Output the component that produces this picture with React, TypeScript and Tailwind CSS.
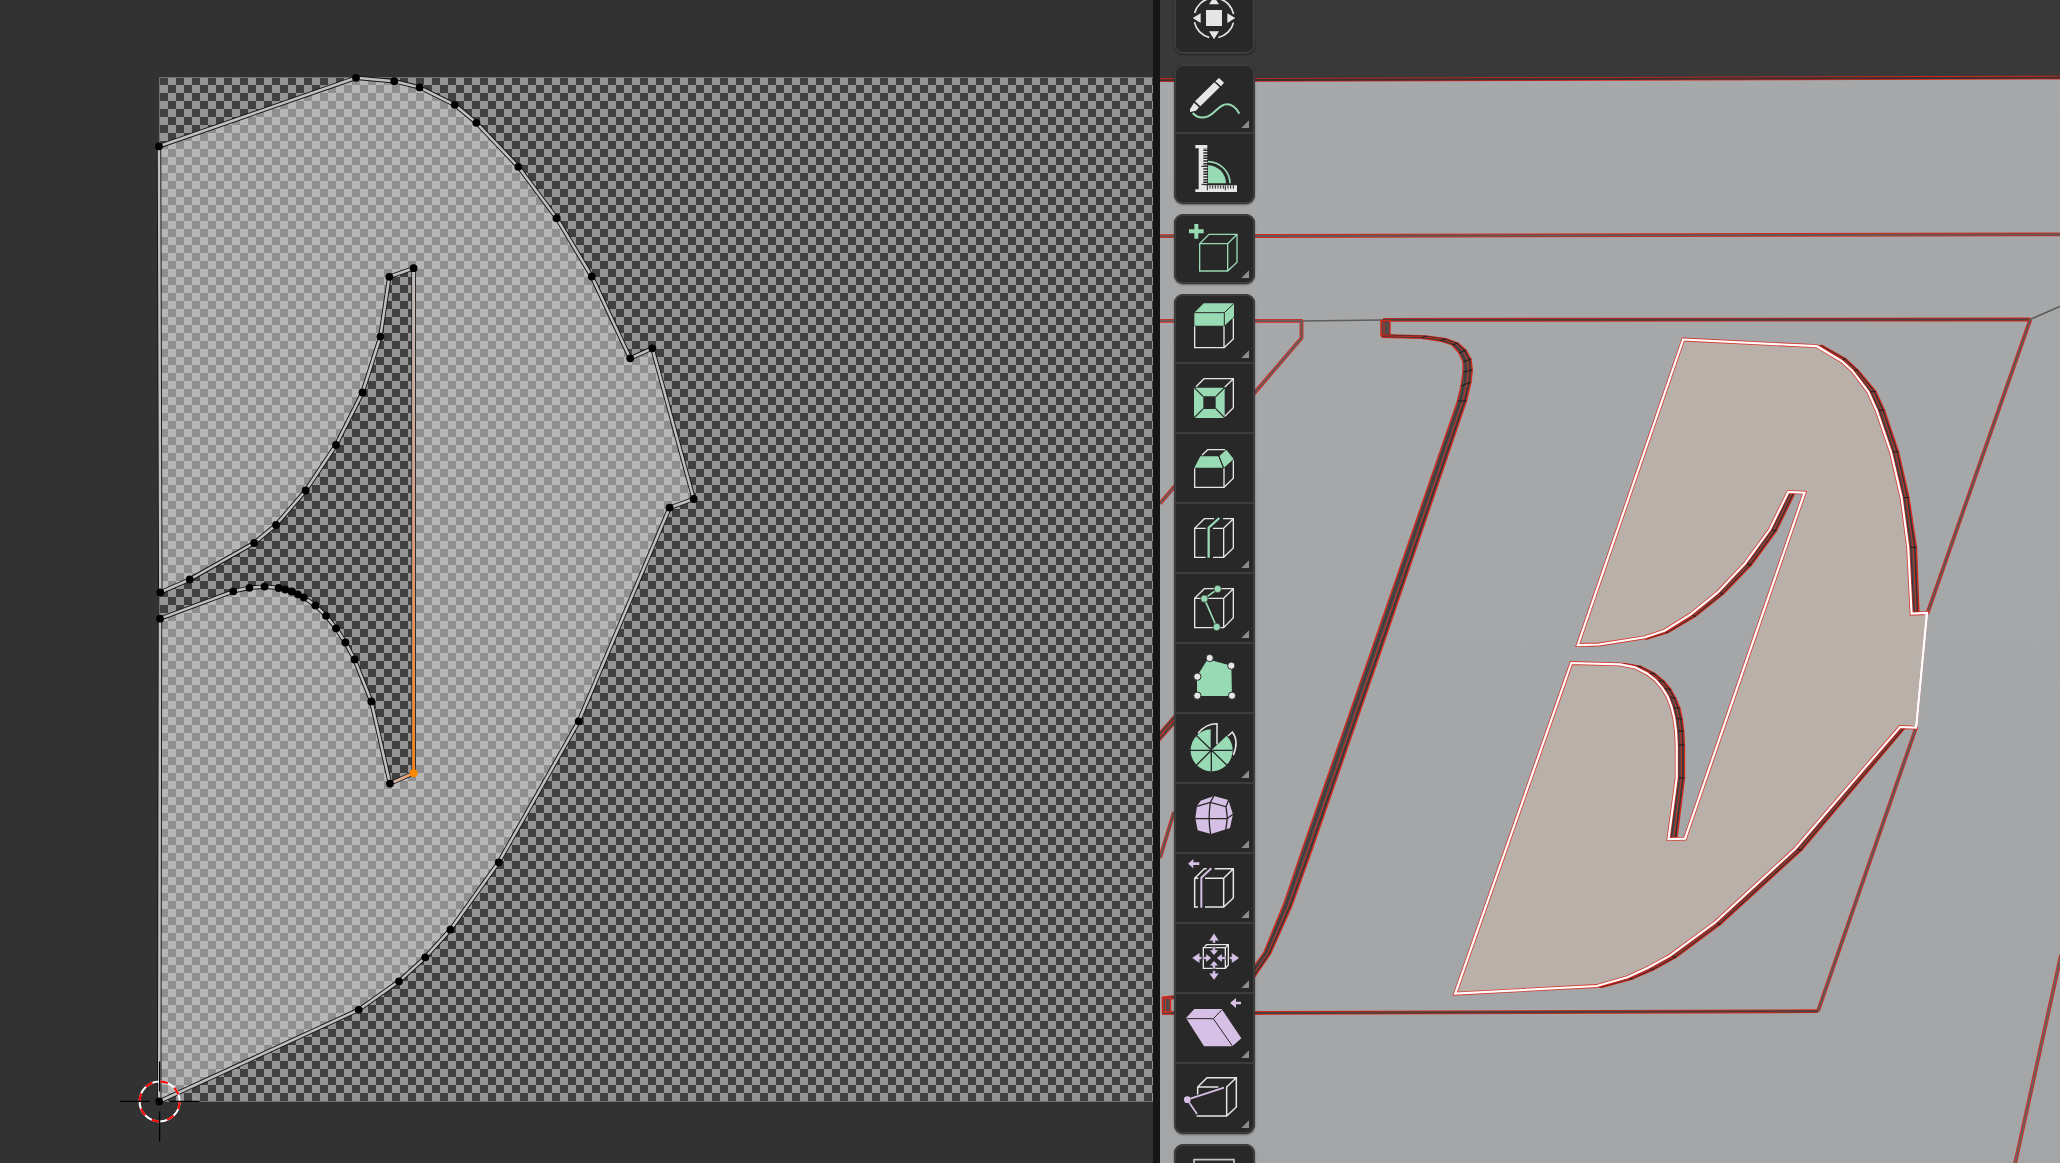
import type { ReactNode } from "react";

const W = "#e6e6e6";
const G = "#97dab3";
const P = "#d6c0e5";
const D = "#282828";
const RED = "#d8281c";

type Pt = [number, number];
const join = (pts: Pt[]) => pts.map((p) => p.join(",")).join(" ");

/* ---------- UV editor ---------- */

const uvPoints: Pt[] = [
  [159, 146.3], [356, 77.8], [394.3, 81.2], [419.6, 87.4], [454.7, 104.8], [476.4, 122.8],
  [518.3, 166.8], [556.7, 218.2], [591.8, 276.5], [630.2, 358.3], [652.4, 348.3], [693.7, 499],
  [669.6, 507.7], [578.7, 721.3], [498.7, 862.3], [450.4, 929.7], [425.3, 957.3], [399, 981.3],
  [358.7, 1009.8], [159.2, 1101.5], [160, 618.7], [233.3, 591.3], [249.4, 587.8], [264.6, 586.6],
  [278.6, 588], [285.2, 589.5], [291.7, 591.5], [297.8, 594.3], [303.8, 597.5], [315.4, 605.4],
  [326, 615.8], [336, 628.3], [345.4, 642.5], [354.5, 659.4], [371.3, 701.4], [390, 783.6],
  [413.6, 773.2], [413.6, 268.2], [389.3, 276.8], [380.4, 336.6], [362.5, 392.5], [336, 445],
  [305.7, 490.5], [276, 525], [254.2, 543], [189.7, 579.5], [160.3, 592.4],
];

function UvEditor() {
  return (
    <section className="h-full w-[1153px] shrink-0 bg-[#323232]">
      <svg className="block" width="1153" height="1163" viewBox="0 0 1153 1163">
        <defs>
          <pattern id="checker" x="160" y="77" width="16" height="16" patternUnits="userSpaceOnUse">
            <rect width="16" height="16" fill="#949494" />
            <rect width="8" height="8" fill="#404040" />
            <rect x="8" y="8" width="8" height="8" fill="#404040" />
          </pattern>
          <linearGradient id="selTall" gradientUnits="userSpaceOnUse" x1="0" y1="268" x2="0" y2="773">
            <stop offset="0" stopColor="#c2bfbd" />
            <stop offset="0.5" stopColor="#dc9c80" />
            <stop offset="1" stopColor="#ff8010" />
          </linearGradient>
          <linearGradient id="selShort" gradientUnits="userSpaceOnUse" x1="390" y1="0" x2="413" y2="0">
            <stop offset="0" stopColor="#c8bcb6" />
            <stop offset="1" stopColor="#f79152" />
          </linearGradient>
        </defs>
        <rect x="159" y="77" width="1000" height="1025" fill="#707070" />
        <rect x="160" y="78" width="1000" height="1023" fill="url(#checker)" shapeRendering="crispEdges" />
        <polygon points={join(uvPoints)} fill="#d7d7d7" fillOpacity="0.52" />
        <polygon points={join(uvPoints)} fill="none" stroke="#161616" strokeWidth="4.4" strokeLinejoin="round" />
        <polygon points={join(uvPoints)} fill="none" stroke="#c0c0c0" strokeWidth="2.5" strokeLinejoin="round" />
        <rect x="157" y="594" width="6" height="23" fill="#323232" />
        <rect x="160" y="594" width="3" height="23" fill="url(#checker)" />
        <rect x="159" y="594" width="1" height="23" fill="#707070" />
        <rect x="412.3" y="268" width="2.6" height="505" fill="url(#selTall)" />
        <line x1="390" y1="783.6" x2="413.6" y2="773.2" stroke="url(#selShort)" strokeWidth="2.5" />
        {uvPoints.map(([x, y], i) =>
          i === 36 ? null : <circle key={i} cx={x} cy={y} r="3.9" fill="#000" />
        )}
        <circle cx="413.6" cy="773.2" r="4" fill="#ff8500" />
        <g transform="translate(159.6 1101.4)" fill="none">
          <circle r="20" stroke="#fff" strokeWidth="2" />
          <circle r="20" stroke="#f00" strokeWidth="2" strokeDasharray="7.854 7.854" />
          <path d="M-40 0H-10M10 0H40M0-40V-10M0 10V40" stroke="#000" strokeWidth="1.3" />
        </g>
      </svg>
    </section>
  );
}

/* ---------- 3D viewport ---------- */

const face: Pt[] = [
  [1683.2, 339.5], [1816.8, 346.2], [1841.5, 361], [1852.3, 370.7], [1868.3, 391.8], [1876.8, 410.7],
  [1891, 452.3], [1901.6, 497.7], [1908.2, 547.3], [1911.6, 613.7], [1927, 613], [1916, 727.7],
  [1900, 727], [1795, 849], [1714.8, 922.7], [1670, 955.6], [1648, 967.8], [1627.4, 977.3],
  [1596.7, 986], [1455.2, 993.6], [1571.3, 663], [1620, 664.3], [1635, 667.3], [1647, 673.5],
  [1655.5, 680], [1662.5, 688.3], [1667.7, 696.7], [1671.6, 707], [1674.3, 718.3], [1676, 731],
  [1676.7, 745], [1676.7, 778], [1668.5, 839], [1685, 838.6], [1804.5, 492.7], [1788.3, 491.9],
  [1770, 529.3], [1745, 563.5], [1717.7, 592.4], [1690.7, 614.4], [1664.5, 630.7], [1645, 637.3],
  [1599, 644.5], [1577.8, 645],
];

type RibbonShape = { inner: Pt[]; outer: Pt[]; ticks?: number };

const ribbons: RibbonShape[] = [
  {
    inner: face.slice(1, 10),
    outer: [[1822, 345.4], [1845.5, 358.5], [1858, 370], [1876, 391.5], [1884.5, 410], [1898.5, 451.5], [1909, 497.5], [1916.5, 547.5], [1919, 612.5]],
  },
  {
    inner: face.slice(12, 19),
    outer: [[1905, 728], [1802, 850], [1720.5, 924.5], [1676, 957.5], [1653.5, 970], [1632.5, 979], [1601, 987.5]],
  },
  {
    inner: face.slice(21, 33),
    outer: [[1624, 663.3], [1641, 666.3], [1655, 673.5], [1664.5, 681.5], [1671, 689.5], [1676, 698.5], [1680, 708.5], [1682.3, 719], [1683.8, 731], [1684.5, 745], [1684.5, 778], [1677, 838]],
  },
  {
    inner: face.slice(35, 42),
    outer: [[1794.5, 494], [1776.5, 531], [1751.5, 565], [1723.5, 594], [1695.5, 616.5], [1668, 632.7], [1646, 639.3]],
  },
  {
    inner: [[1382, 337.3], [1422, 338.3], [1440, 341], [1452, 345], [1459, 353], [1463, 362], [1463, 372], [1461, 386], [1457.5, 401], [1371.5, 650], [1302, 850], [1284, 903], [1264, 952], [1252, 969]],
    outer: [[1382, 334.6], [1426, 336], [1446, 338.7], [1458, 343], [1466, 350], [1471, 359], [1472.3, 370], [1471, 382], [1466.5, 401], [1381.5, 650], [1312, 850], [1291.5, 907], [1270.5, 954], [1252, 981]],
    ticks: 8,
  },
];

function Ribbon({ inner, outer, ticks = 99 }: RibbonShape) {
  const blend = (t: number): Pt[] => inner.map(([x, y], i) => [x + (outer[i][0] - x) * t, y + (outer[i][1] - y) * t]);
  return (
    <g fill="none" strokeLinejoin="round">
      <polygon points={join([...inner, ...[...outer].reverse()])} fill="#504c4b" stroke={RED} strokeWidth="1.3" />
      <polyline points={join(blend(0.3))} stroke="#3c3837" strokeWidth="1.2" />
      <polyline points={join(blend(0.8))} stroke="#38302f" strokeWidth="1.2" />
      <polyline points={join(blend(0.6))} stroke={RED} strokeWidth="0.9" />
      {inner.slice(1, -1).map((p, i) =>
        i < ticks ? (
          <line key={i} x1={p[0]} y1={p[1]} x2={outer[i + 1][0]} y2={outer[i + 1][1]} stroke="#241f1f" strokeWidth="1.2" />
        ) : null
      )}
    </g>
  );
}

const seams: { pts: Pt[]; core: string }[] = [
  { pts: [[1160, 80.2], [2060, 77.6]], core: "#3c3030" },
  { pts: [[1160, 236.2], [2060, 234.4]], core: "#5f5a5a" },
  { pts: [[1160, 320.8], [1301.5, 320.8], [1301.5, 338], [1160, 503.5]], core: "#655f5f" },
  { pts: [[1383, 319.8], [2030.3, 319.5]], core: "#4a4040" },
  { pts: [[2030.3, 319.5], [1927.5, 613]], core: "#5e5a5a" },
  { pts: [[1916, 728], [1818, 1011.2]], core: "#5e5a5a" },
  { pts: [[1818, 1011.2], [1255, 1013]], core: "#4a4040" },
  { pts: [[2061, 955], [2015, 1164]], core: "#6a6060" },
  { pts: [[1160, 858], [1174, 812]], core: "#5f5a5a" },
  { pts: [[1158, 736], [1178, 713]], core: "#4a4646" },
  { pts: [[1158, 741], [1178, 718]], core: "#4a4646" },
  { pts: [[1162, 1013], [1176, 1013]], core: "#4a4646" },
  { pts: [[1162, 998.5], [1176, 997]], core: "#4a4646" },
];

function Viewport() {
  return (
    <svg className="block" width="900" height="1163" viewBox="1160 0 900 1163">
      <defs>
        <linearGradient id="plane" x1="0" y1="0" x2="0" y2="1">
          <stop offset="0" stopColor="#a7a8a9" />
          <stop offset="1" stopColor="#a3a5a6" />
        </linearGradient>
      </defs>
      <rect x="1160" y="0" width="900" height="90" fill="#393939" />
      <polygon points="1160,80 2060,77.5 2060,1163 1160,1163" fill="url(#plane)" />
      <g fill="none" stroke="#5c5d5e" strokeWidth="1.5">
        <path d="M1302 321L1383 320M2030 319.5L2061 306" />
      </g>
      {seams.map(({ pts, core }, i) => (
        <g key={i} fill="none" strokeLinejoin="round">
          <polyline points={join(pts)} stroke={RED} strokeWidth="3.8" />
          <polyline points={join(pts)} stroke={core} strokeWidth="2.1" />
        </g>
      ))}
      <rect x="1381" y="320.5" width="9" height="15" fill="#504c4b" stroke={RED} strokeWidth="1.4" />
      <path d="M1384 320V335" stroke={RED} strokeWidth="1" />
      <rect x="1162.5" y="998" width="8" height="14" fill="#504c4b" stroke={RED} strokeWidth="1.6" />
      <path d="M1165.5 998V1013" stroke={RED} strokeWidth="1" />
      <polygon points={join(face)} fill="#b9b0aa" />
      {ribbons.map((r, i) => (
        <Ribbon key={i} {...r} />
      ))}
      <polygon points={join(face)} fill="none" stroke={RED} strokeOpacity="0.85" strokeWidth="3.8" />
      <polygon points={join(face)} fill="none" stroke="#fff" strokeWidth="2.2" />
      <path d="M1929 614.5L1918.5 726" stroke="#a6a7a8" strokeWidth="2" />
      <path d="M1924.8 614.5L1914 726" stroke="#b9b0aa" strokeWidth="2" />
      <path d="M1926.9 613.5L1916.2 727" stroke="#fff" strokeWidth="2.2" />
    </svg>
  );
}

/* ---------- toolbar ---------- */

type Tool = { y: number; menu?: boolean; art: ReactNode };

const cube = "M164 730L193 701H280V788L251 818H164ZM164 730H251V818M251 730L280 701";

const transformTool: Tool[] = [
  {
    y: -48,
    art: (
      <g fill={W}>
        <circle cx="222" cy="54" r="60" fill="none" stroke={W} strokeWidth="5" strokeDasharray="66 28.25" strokeDashoffset="-14.1" />
        <path d="M198 30H246V78H198ZM158 54L182 40V69ZM286 54L262 40V69ZM222 118L207 94H237ZM222-10L207 13H237Z" />
      </g>
    ),
  },
];

const annotationTools: Tool[] = [
  {
    y: 192,
    menu: true,
    art: (
      <>
        <path d="M158 339C170 352 187 356 204 349C226 340 238 313 260 313C278 313 289 324 298 341" fill="none" stroke={G} strokeWidth="6" />
        <path fill={W} d="M237 234L252 248L243 259L226 244ZM223 247L239 262L181 319L165 304ZM162 308L177 322L168 332L150 336V328Z" />
      </>
    ),
  },
  {
    y: 402,
    art: (
      <>
        <path d="M204 550V496A54 54 0 0 1 258 550Z" fill={G} />
        <path d="M204 485A66 66 0 0 1 270 550" fill="none" stroke={G} strokeWidth="5" />
        <path fill={W} d="M166 435H202V445H178V568H291V576H166V568H176V445H166ZM178 445H190V568H178ZM190 556H291V576H180Z" />
        <path stroke={W} strokeWidth="3.5" d="M188 447H202M188 455H202M188 463H202M188 471H202M188 479H202M188 487H202M188 495H202M188 503H202M188 511H202M188 519H202M188 527H202M188 535H202M188 543H202M188 551H202" />
        <path stroke={D} strokeWidth="3" d="M184 499H202M184 553H202M202 552V571M210 556V566M218 556V566M226 556V566M234 556V566M242 556V566M250 556V566M256 556V571M264 556V566M272 556V566M280 556V566" />
      </>
    ),
  },
];

const addTools: Tool[] = [
  {
    y: 642,
    menu: true,
    art: (
      <>
        <path fill={G} d="M163 672H175V688H191V700H175V716H163V700H147V688H163Z" />
        <path fill="none" stroke={G} strokeWidth="4" d="M179 731L207 703H291V787L263 813H179ZM179 731H263V813M263 731L291 703" />
      </>
    ),
  },
];

const modellingTools: Tool[] = [
  {
    y: 27,
    menu: true,
    art: (
      <>
        <path fill="none" stroke={W} strokeWidth="4" d="M164 124V188H252V124M252 188L280 162V100" />
        <path fill={G} d="M163 83L191 55H282V95L253 122H163Z" />
        <path fill="none" stroke={D} strokeWidth="3" d="M163 83H253V122M253 83L282 55" />
      </>
    ),
  },
  {
    y: 237,
    art: (
      <>
        <path fill="none" stroke={W} strokeWidth="4" d="M168 305L192 281H280V368L253 395M254 307L280 281" />
        <path fill={G} fillRule="evenodd" d="M162 308H254V399H162ZM190 334V372H227V334Z" />
        <path stroke={D} strokeWidth="3.5" d="M162 307L190 335M255 307L227 335M162 399L190 371M255 399L227 371" />
      </>
    ),
  },
  {
    y: 447,
    art: (
      <>
        <path fill="none" stroke={W} strokeWidth="4" d="M164 550V607H252V550M252 607L280 580V526M186 511L203 494H255" />
        <path fill={G} d="M163 548L181 514H235L249 548ZM238 513L259 494L281 522L252 548Z" />
        <path d="M236 512L251 549" stroke={D} strokeWidth="3" />
      </>
    ),
  },
  {
    y: 657,
    menu: true,
    art: (
      <>
        <path fill="none" stroke={W} strokeWidth="4" d="M197 817H164V730L193 701H222M164 730H197M219 730H251V817H219M251 817L280 789V701H249M251 730L280 701" />
        <path fill="none" stroke={G} strokeWidth="7" d="M206 818V728L238 699" />
      </>
    ),
  },
  {
    y: 12,
    menu: true,
    art: (
      <>
        <path transform="translate(0 -645)" fill="none" stroke={W} strokeWidth="4" d={cube} />
        <path fill="none" stroke={D} strokeWidth="12" d="M233 57L193 86L230 171" />
        <path fill="none" stroke={G} strokeWidth="5" d="M233 57L193 86L230 171" />
        <g fill={G} stroke={D} strokeWidth="2">
          <circle cx="233" cy="57" r="11" />
          <circle cx="193" cy="86" r="11" />
          <circle cx="230" cy="171" r="11" />
        </g>
      </>
    ),
  },
  {
    y: 222,
    art: (
      <>
        <path fill={G} d="M171 378V319L203 268L274 287L276 378Z" />
        <g fill={W} stroke={D} strokeWidth="3">
          <circle cx="209" cy="264" r="11" />
          <circle cx="274" cy="287" r="11" />
          <circle cx="172" cy="320" r="11" />
          <circle cx="172" cy="377" r="11" />
          <circle cx="276" cy="377" r="11" />
        </g>
      </>
    ),
  },
  {
    y: 432,
    menu: true,
    art: (
      <>
        <path fill="none" stroke={W} strokeWidth="4.5" d="M174 490C190 470 208 461 231 461V523M264 498L277 486C294 508 290 532 280 556" />
        <path fill={G} d="M214 541V478A63 63 0 1 0 260 497Z" />
        <path stroke={D} strokeWidth="4" d="M150 541H278M214 478V604M170 497L260 585M168 587L214 541" />
      </>
    ),
  },
  {
    y: 642,
    menu: true,
    art: (
      <>
        <path fill={P} d="M182 692L222 678L265 690L279 733L270 774L213 792L173 781L166 745L171 708Z" />
        <path fill="none" stroke={D} strokeWidth="4" d="M171 709L211 697L258 710L262 744L257 782M222 677L211 697C206 730 206 760 212 793M165 746H261L280 732M258 710L266 690" />
      </>
    ),
  },
  {
    y: 12,
    menu: true,
    art: (
      <>
        <path fill={P} d="M144 41L160 27V37H178V45H160V55Z" />
        <path fill="none" stroke={W} strokeWidth="4.5" d="M174 171H164V85L193 56H200M164 85H175M195 171H251V85H195M251 171L280 144V56H224M251 85L280 56" />
        <path fill="none" stroke={P} strokeWidth="6" d="M184 173V83L214 55" />
      </>
    ),
  },
  {
    y: 222,
    menu: true,
    art: (
      <>
        <path fill="none" stroke={W} strokeWidth="4" d="M190 293H256V355H190ZM193 290L200 284H265V345L257 354M256 293L265 284" />
        <path
          fill={P}
          stroke={D}
          strokeWidth="1"
          d="M222 250L237 272H226V279H218V272H207ZM222 390L237 370H226V362H218V370H207ZM156 324L179 308V320H185V328H179V340ZM298 324L275 308V320H269V328H275V340ZM222 316L209 300H218V290H226V300H235ZM222 332L209 347H218V357H226V347H235ZM214 324L198 311V320H188V328H198V337ZM230 324L246 311V320H257V328H246V337Z"
        />
      </>
    ),
  },
  {
    y: 432,
    menu: true,
    art: (
      <>
        <path fill={P} d="M270 459L288 444V455H303V463H288V474ZM138 504L163 477H245L304 565L277 589H192Z" />
        <path fill="none" stroke={D} strokeWidth="3" d="M140 506H220L277 588M220 506L246 479" />
      </>
    ),
  },
  {
    y: 642,
    menu: true,
    art: (
      <>
        <path fill="none" stroke={W} strokeWidth="4.5" d="M173 734V711L201 683H289V771L260 798H170M173 711H235M260 798V711L289 683" />
        <path fill="none" stroke={D} strokeWidth="11" d="M154 746L250 714" />
        <path fill="none" stroke={P} strokeWidth="5" d="M151 746L252 713M148 758L171 792" />
        <circle cx="142" cy="749" r="10" fill={P} />
      </>
    ),
  },
];

const toolGroups: Tool[][] = [
  transformTool,
  annotationTools,
  addTools,
  modellingTools,
  [{ y: 882, art: <path fill="none" stroke="#c4c4c4" strokeWidth="5" d="M162 960V929H282V960" /> }],
];

function ToolCell({ y, menu, art }: Tool) {
  return (
    <button className="block h-[70px] w-[81px] overflow-hidden border-b-2 border-[#3d3d3d] bg-[#282828] last:border-b-0">
      <svg className="block" width="81" height="70" viewBox={`102 ${y} 243 210`}>
        {art}
        {menu && <path fill="#8c8c8c" d={`M327 ${y + 169}V${y + 192}H304Z`} />}
      </svg>
    </button>
  );
}

function Toolbar() {
  return (
    <nav className="absolute -top-4 left-3.5 flex flex-col gap-2.5">
      {toolGroups.map((tools, i) => (
        <div
          key={i}
          className="relative flex flex-col overflow-hidden rounded-[9px] shadow-[0_1px_2px_rgba(0,0,0,0.4)] after:absolute after:inset-0 after:rounded-[9px] after:border-2 after:border-[#3d3d3d] after:content-['']"
        >
          {tools.map((tool, j) => (
            <ToolCell key={j} {...tool} />
          ))}
        </div>
      ))}
    </nav>
  );
}

export default function App() {
  return (
    <div className="flex h-[1163px] w-[2060px] overflow-hidden bg-[#161616]">
      <UvEditor />
      <div className="w-[7px] shrink-0 bg-[#161616]" />
      <main className="relative h-full w-[900px] shrink-0 overflow-hidden">
        <Viewport />
        <Toolbar />
      </main>
    </div>
  );
}
